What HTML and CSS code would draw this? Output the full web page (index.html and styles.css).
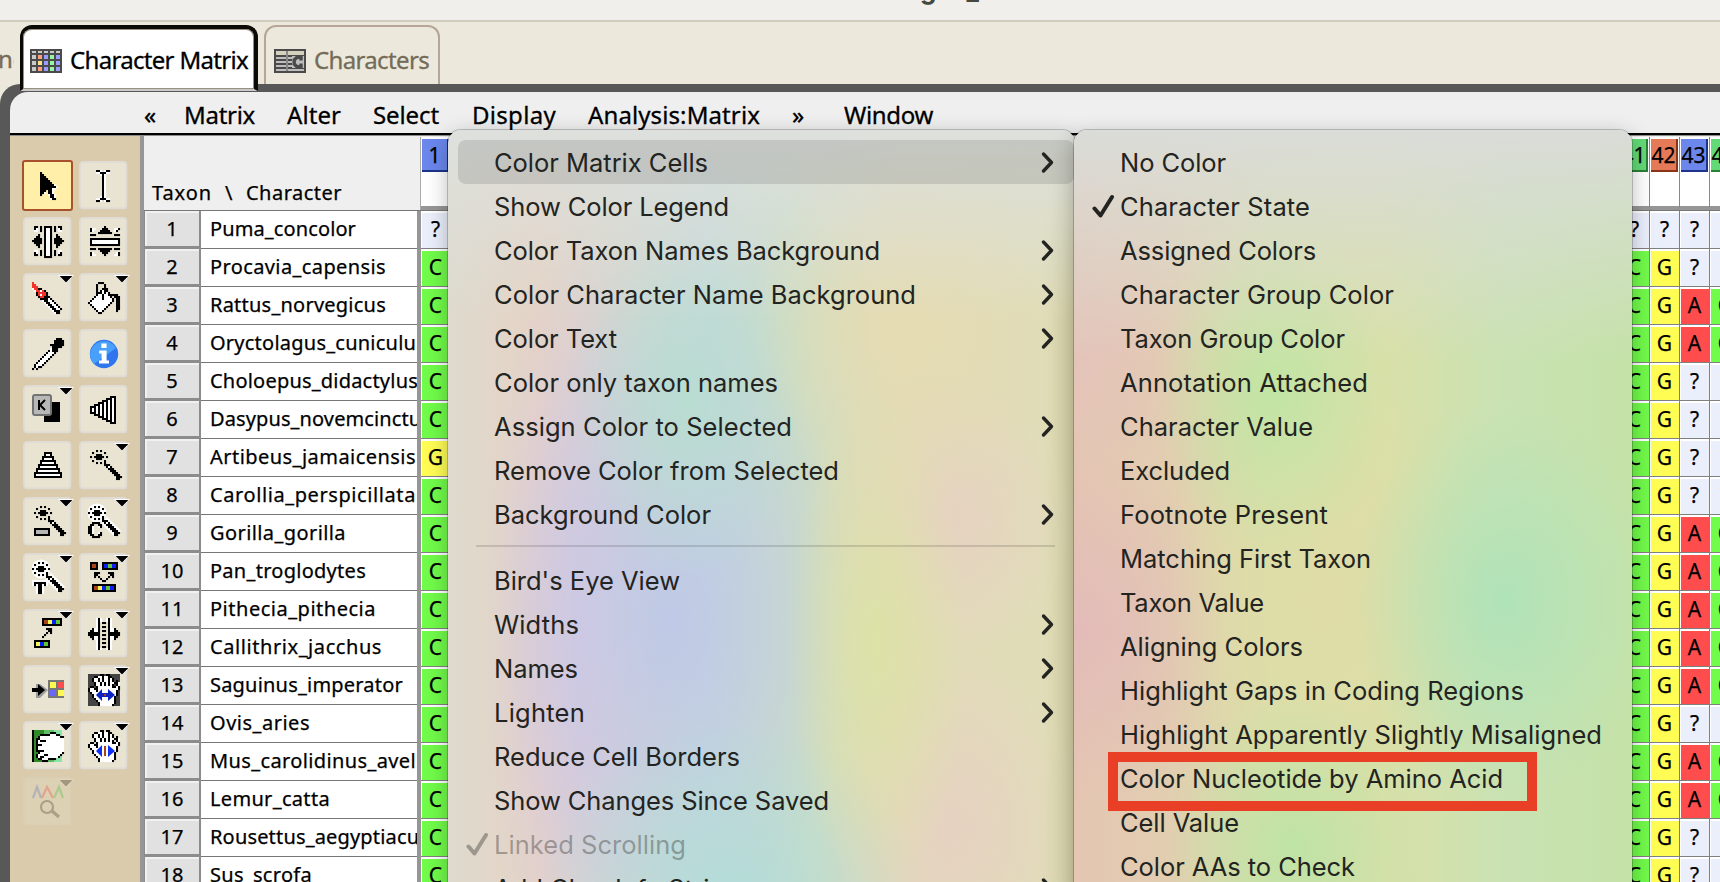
FILE: index.html
```html
<!DOCTYPE html>
<html lang="en">
<head>
<meta charset="utf-8">
<title>Character Matrix</title>
<link rel="stylesheet" href="styles.css">
</head>
<body>
<div class="app">
  <header class="titlebar"><span class="title">ges_</span><span class="subtitle">Characters</span></header>
  <nav class="tabs">
    <div class="tab-cut">ne</div>
    <div class="tab active">
      <svg class="tab-icon" viewBox="0 0 32 24"><path fill="#4a4a4a" d="M0 0h32v24H0z"/><g fill="#c9c9c9"><path d="M2 2h4v2H2zM8 2h4v2H8zM14 2h4v2h-4zM20 2h4v2h-4zM26 2h4v2h-4zM2 6h4v4H2zM2 12h4v4H2zM2 18h4v4H2z"/></g><path fill="#ffa07c" d="M8 6h4v4H8zM8 18h4v4H8z"/><path fill="#ffe28a" d="M8 12h4v4H8z"/><path fill="#9c9cff" d="M14 6h4v4h-4zM14 12h4v4h-4zM14 18h4v4h-4zM26 6h4v4h-4zM26 12h4v4h-4zM26 18h4v4h-4z"/><path fill="#93f7a4" d="M20 6h4v4h-4zM20 12h4v4h-4zM20 18h4v4h-4z"/></svg>
      <span data-w="178">Character Matrix</span>
    </div>
    <div class="tab">
      <svg class="tab-icon" viewBox="0 0 32 24"><path fill="#4a4a4a" d="M0 0h32v24H0z"/><path fill="#d2d1bd" d="M2 2h28v4H2z"/><path fill="#bebebe" d="M2 8h28v2H2zM2 12h28v2H2zM2 16h28v2H2zM2 20h28v2H2z"/><path fill="#888" d="M12 2h2v20h-2z"/><path fill="#bebebe" d="M18 7h12v12H18z"/><path fill="none" stroke="#4a4a4a" stroke-width="3.4" d="M27 11.500V8.200h-4L20.200 11v4l2.800 2.800h4v-3.300"/></svg>
      <span data-w="115">Characters</span>
    </div>
  </nav>
  <div class="frame">
    <main class="panel">
      <div class="menubar">
        <span class="m-prev">«</span><span class="m-matrix" data-w="71">Matrix</span><span class="m-alter" data-w="54">Alter</span><span class="m-select" data-w="66">Select</span><span class="m-display" data-w="84">Display</span><span class="m-analysis" data-w="172">Analysis:Matrix</span><span class="m-next">»</span><span class="m-window" data-w="89">Window</span>
      </div>
      <div class="workspace">
        <aside class="toolbox" id="toolbox"></aside>
        <section class="sheet" id="sheet"></section>
      </div>
    </main>
  </div>
  <div class="menu menu-display" id="display"></div>
  <div class="menu menu-color" id="colors"></div>
  <div class="marker"></div>
</div>
<script src="app.js"></script>
</body>
</html>
```

FILE: styles.css
```css
* { box-sizing: border-box; }
body { margin: 0; font-family: "Noto Sans", "Open Sans", sans-serif; color: #000; overflow: hidden; }
.app { position: relative; width: 1720px; height: 882px; overflow: hidden; background: #ece8db; display: flex; flex-direction: column; }
span[data-w] { white-space: nowrap; display: inline-block; }

.titlebar { flex: none; height: 22px; background: #f0efeb; border-bottom: 2px solid #cfccbe; overflow: hidden; padding-left: 920px; display: flex; font: bold 26px/36px Inter, sans-serif; color: #444841; }
.title { width: 108px; margin-top: -28px; }
.subtitle { margin-top: -27px; color: #a9aaa5; font-size: 24px; }

.tabs { flex: none; height: 62px; display: flex; align-items: flex-start; padding-top: 3px; font-size: 24px; color: #746c58; position: relative; z-index: 2; -webkit-text-stroke: .3px; }
.tab-cut { width: 14px; height: 59px; margin-right: 6px; overflow: hidden; line-height: 68px; text-indent: -2px; }
.tab { height: 59px; width: 176px; display: flex; align-items: center; gap: 8px; padding: 10px 0 0 8px; border: 2px solid #b5a698; border-bottom: 0; border-radius: 12px 12px 0 0; margin-left: 6px; }
.tab.active { width: 238px; height: 66px; margin-left: 0; padding: 3px 0 0 7px; background: #fff; color: #000; border: 4px solid #0c0a07; border-bottom: 2px solid #c9c9c9; border-left-width: 3px; box-shadow: inset 0 0 0 1px #9a9082; }
.tab-icon { width: 32px; height: 24px; flex: none; }
.tab span { line-height: 34px; margin-top: -2px; }

.frame { flex: 1; background: #585858; border-top-left-radius: 20px; padding: 8px 0 0 10px; min-height: 0; }
.panel { height: 100%; background: #efefef; border-top-left-radius: 18px; display: flex; flex-direction: column; overflow: hidden; }
.menubar { flex: none; height: 43px; border-bottom: 2px solid #000; position: relative; display: flex; padding-left: 134px; font-size: 24px; line-height: 45px; box-shadow: 0 1px 0 #8d8d8d; -webkit-text-stroke: .3px; }
.m-prev { width: 40px; }
.m-matrix { width: 103px; }
.m-alter { width: 86px; }
.m-select { width: 99px; }
.m-display { width: 116px; }
.m-analysis { width: 204px; }
.m-next { width: 52px; }

.workspace { flex: 1; display: flex; min-height: 0; }
.toolbox { flex: none; width: 130px; background: #d9cbab; padding: 25px 0 0 12px; display: grid; grid-template-columns: 56px 56px; grid-auto-rows: 56px; }
.tool { width: 56px; height: 56px; display: block; overflow: visible; }
.tool.off { opacity: .25; }
.sheet { flex: 1; border-left: 4px solid #969696; overflow: hidden; padding-top: 2px; -webkit-text-stroke: .25px; }
.head, .row { display: flex; }
.head { height: 74px; border-bottom: 1px solid #777; }
.corner { width: 277px; height: 73px; flex: none; border-right: 1px solid #aaa; padding: 43px 0 0 8px; font-size: 20px; line-height: 25px; display: flex; }
.corner .w1 { width: 73px; }
.corner .w2 { width: 21px; }
.spacer { flex: none; width: 1169px; }
.col { flex: none; width: 30px; height: 73px; border-right: 1px solid #888; border-bottom: 4px solid #969696; background: #fff; }
.col b { display: block; margin: 2px 1px 0 1px; height: 33px; font: 21px/32px "Noto Sans", sans-serif; text-align: center; border-right: 2px solid; border-bottom: 2px solid; white-space: nowrap; }
.col i { font-style: normal; color: #000; }
.col .blue { background: #6b87ec; border-color: #1c3489; }
.col .green { background: #63da78; border-color: #2b7f36; }
.col .orange { background: #e57a58; border-color: #8a3417; }

.row { height: 38px; font-size: 20px; line-height: 35px; }
.num { flex: none; width: 57px; height: 38px; text-align: center; background: #e1e1e1; border: solid #8c8c8c; border-width: 0 2px 3px 1px; box-shadow: inset 2px 2px 0 #f1f1f1; }
.name { flex: none; width: 216px; height: 38px; padding-left: 9px; background: #fff; border-bottom: 1px solid #777; overflow: hidden; white-space: nowrap; }
.gutter { flex: none; width: 4px; background: #969696; }
.cell { flex: none; width: 30px; height: 38px; text-align: center; border: solid #808080; border-width: 0 1px 1px 0; box-shadow: inset 1px 2px 0 #fff; line-height: 36px; font-size: 21px; }
.cell.C { background: #71fb4a; }
.cell.G { background: #fffd54; }
.cell.A { background: #ff4d4d; }
.cell.Q { background: #ebeffb; }

.menu { position: absolute; top: 130px; height: 790px; padding-top: 10px; border-radius: 13px; box-shadow: 0 0 0 1px rgba(0,0,0,.2), 0 6px 22px rgba(0,0,0,.28); font: 25.5px/44px Inter, sans-serif; color: #232421; }
.menu-display { left: 448px; width: 627px; background:
  linear-gradient(#dde0dc 0, rgba(221,224,220,0) 190px),
  linear-gradient(90deg, transparent 595px, #d3d0a5 627px),
  radial-gradient(90px 260px at 430px 510px, #dde2a7 0, transparent 100%),
  radial-gradient(150px 190px at 455px 190px, #e5dcb2 0, transparent 100%),
  radial-gradient(120px 180px at 240px 270px, #b9ddd1 0, transparent 100%),
  radial-gradient(190px 170px at 280px 760px, #b4dcd8 0, transparent 100%),
  radial-gradient(180px 330px at 225px 490px, #bfc9e6 0, transparent 100%),
  radial-gradient(100px 400px at 135px 500px, #d9c7e2 0, transparent 100%),
  radial-gradient(130px 150px at 495px 390px, #e6d2c2 0, transparent 100%),
  radial-gradient(130px 190px at 505px 700px, #e6d2c2 0, transparent 100%),
  linear-gradient(90deg, #dedacd 0, #e5d3c5 90px, #c5d9d9 260px, #cbddc6 350px, #e1dbb7 450px, #e0ddb8 627px); }
.menu-color { left: 1074px; width: 558px; background:
  linear-gradient(#dadcd8 0, rgba(217,222,215,0) 230px),
  radial-gradient(150px 200px at 430px 470px, #b0e3b8 0, transparent 100%),
  radial-gradient(120px 170px at 200px 260px, #c1e5a5 0, transparent 100%),
  radial-gradient(130px 150px at 220px 715px, #bfe3a6 0, transparent 100%),
  radial-gradient(140px 180px at 10px 500px, #e3bcb9 0, transparent 100%),
  radial-gradient(130px 150px at 0 220px, #e4c4ba 0, transparent 100%),
  radial-gradient(160px 250px at 250px 470px, #e0dca7 0, transparent 100%),
  linear-gradient(90deg, #e4c6b2 0, #e2ceb0 100px, #d9dfa8 200px, #d9e0a8 310px, #cae2b3 430px, #c5e2a8 558px); }
.item { height: 44px; position: relative; display: flex; align-items: center; padding-left: 46px; white-space: nowrap; }
.item span { position: relative; top: 1px; }
.menu-color .item { padding-left: 46px; }
.item.on { margin-left: 10px; padding-left: 36px; margin-right: 1px; background: rgba(0,0,0,.11); border-radius: 8px; }
.item.dim { color: rgba(35,36,33,.36); }
.sep { height: 22px; margin: 0 20px 0 28px; padding-top: 9px; }
.sep::before { content: ""; display: block; height: 2px; background: rgba(0,0,0,.13); }
.arrow { position: absolute; right: 21px; top: 10px; width: 13px; height: 24px; }
.item.on .arrow { right: 20px; }
.tick { position: absolute; left: 18px; top: 10px; width: 23px; height: 24px; }
.arrow path, .tick path { fill: none; stroke: currentColor; stroke-width: 3.4; stroke-linecap: round; stroke-linejoin: round; }
.marker { position: absolute; left: 1108px; top: 752px; width: 429px; height: 59px; border: 10px solid #e93f26; }
```

FILE: app.js
```js
// Character matrix data: [name, width in px, whether site 43 is scored A]
const taxa = [
  ['Puma_concolor', 146, 0], ['Procavia_capensis', 176, 0], ['Rattus_norvegicus', 176, 1],
  ['Oryctolagus_cuniculus', 216, 1], ['Choloepus_didactylus', 208, 0], ['Dasypus_novemcinctus', 221, 0],
  ['Artibeus_jamaicensis', 206, 0], ['Carollia_perspicillata', 206, 0], ['Gorilla_gorilla', 136, 1],
  ['Pan_troglodytes', 156, 1], ['Pithecia_pithecia', 166, 1], ['Callithrix_jacchus', 172, 1],
  ['Saguinus_imperator', 193, 1], ['Ovis_aries', 100, 0], ['Mus_carolidinus_avel', 206, 1],
  ['Lemur_catta', 120, 1], ['Rousettus_aegyptiacus', 219, 0], ['Sus_scrofa', 102, 0]
];
const cell = s => `<div class="cell ${s === '?' ? 'Q' : s}">${s}</div>`;
const col = (n, c) => `<div class="col"><b class="${c}"><i>${n}</i></b></div>`;
let sheet = `<div class="head"><div class="corner"><span class="w1" data-w="60">Taxon</span><span class="w2">\\</span><span data-w="96">Character</span></div>
  ${col(1, 'blue')}<div class="spacer"></div>${col(41, 'green')}${col(42, 'orange')}${col(43, 'blue')}${col(44, 'green')}</div>`;
taxa.forEach(([name, w, a], i) => {
  const first = i === 0 ? '?' : i === 6 ? 'G' : 'C';
  const right = i === 0 ? '????' : 'CG' + (a ? 'AC' : '??');
  sheet += `<div class="row"><div class="num">${i + 1}</div><div class="name"><span data-w="${w}">${name}</span></div><div class="gutter"></div>${cell(first)}<div class="spacer"></div>${[...right].map(cell).join('')}</div>`;
});
document.getElementById('sheet').innerHTML = sheet;

// Menus: [label, width, flags] where > is a submenu, v a tick, * highlighted, - disabled
const display = [
  ['Color Matrix Cells', 214, '>*'], ['Show Color Legend', 235, ''], ['Color Taxon Names Background', 386, '>'],
  ['Color Character Name Background', 422, '>'], ['Color Text', 123, '>'], ['Color only taxon names', 284, ''],
  ['Assign Color to Selected', 298, '>'], ['Remove Color from Selected', 345, ''], ['Background Color', 217, '>'], null,
  ["Bird's Eye View", 186, ''], ['Widths', 85, '>'], ['Names', 84, '>'], ['Lighten', 91, '>'],
  ['Reduce Cell Borders', 246, ''], ['Show Changes Since Saved', 335, ''], ['Linked Scrolling', 192, 'v-'], ['Add Char Info Strip', 231, '>']
];
const colors = [
  ['No Color', 106, ''], ['Character State', 190, 'v'], ['Assigned Colors', 196, ''], ['Character Group Color', 274, ''],
  ['Taxon Group Color', 225, ''], ['Annotation Attached', 248, ''], ['Character Value', 193, ''], ['Excluded', 110, ''],
  ['Footnote Present', 208, ''], ['Matching First Taxon', 251, ''], ['Taxon Value', 144, ''], ['Aligning Colors', 183, ''],
  ['Highlight Gaps in Coding Regions', 404, ''], ['Highlight Apparently Slightly Misaligned', 482, ''],
  ['Color Nucleotide by Amino Acid', 383, ''], ['Cell Value', 119, ''], ['Color AAs to Check', 235, '']
];
const item = it => {
  if (!it) return '<div class="sep"></div>';
  const [t, w, f] = it;
  return `<div class="item${f.includes('*') ? ' on' : ''}${f.includes('-') ? ' dim' : ''}">` +
    (f.includes('v') ? '<svg class="tick" viewBox="0 0 23 24"><path style="stroke-width:4" d="M2.5 14.5L8.5 21.5L20 3"/></svg>' : '') +
    `<span data-w="${w}">${t}</span>` +
    (f.includes('>') ? '<svg class="arrow" viewBox="0 0 13 24"><path d="M2.5 4l8 8.5-8 8.5"/></svg>' : '') + '</div>';
};
document.getElementById('display').innerHTML = display.map(item).join('');
document.getElementById('colors').innerHTML = colors.map(item).join('');

// Tool icons: 16 by 16 bitmaps, one character per pixel
const ink = { '#': '#000', w: '#fff', r: '#f0352b', g: '#b5b5b5', B: '#0a1ef5', G: '#5fc63a', Y: '#f4f552', O: '#a8441c' };
const px = rows => rows.map((r, y) => [...r].map((c, x) => ink[c] ? `<rect x="${x}" y="${y}" width="1.03" height="1.03" fill="${ink[c]}"/>` : '').join('')).join('');
const wand = ['...#.#', '.#.....#', '...###', '#.#####.#', '...###', '.#.....#', '...#.#.#', '.......###', '........#w#', '.........###', '..........###', '...........###', '............###', '.............###', '.............##'];
const wandHalo = '<circle cx="4.5" cy="3.5" r="4.7" fill="#fff"/><path d="M8 7l7 7" stroke="#fff" stroke-width="4.4"/>';
const hand = px([
  '......##.##', '...##ww#ww##', '..#ww#w#ww#w#', '..#ww#w#ww#w#.#', '...#ww#w#w#ww##w', '...#ww#w#w#w#.#w', '.##.#wwwwwww##w#', '#ww##wwwwwwwwww#', '#www#wwwwwwwww#', '.#wwwwwwwwwwww#', '..#wwwwwwwwwww#', '..#wwwwwwwwww#', '...#wwwwwwwww#', '....#wwwwwwww#', '.....#wwwwwww#', '.....#wwwwww#']);
const span = c => `<path fill="${c}" d="M4 10.500l3-3v2h3v-2l3.500 3-3.500 3v-2H7v2z"/>`;
const strip = (x, y, s) => `<path d="M${x} ${y}h${s.length * 2 + 2}v4h-${s.length * 2 + 2}z"/>` + [...s].map((c, i) => `<path fill="${ink[c]}" d="M${x + 1 + i * 2} ${y + 1}h2v2h-2z"/>`).join('');
const tools = [
  [px(['', '....#', '....##', '....###', '....####', '....#####', '....######', '....#######w', '....########w', '....######ww', '....###.##w', '....##w.##w', '....#...w##w', '.........##w', '.........w##']), 'sel'],
  [px(['....##w.w##', '....ww###ww', '......w#w', '.......#w', '.......#w', '.......#w', '.......#w', '.......#w', '.......#w', '.......#w', '.......#w', '.......#w', '.......#w', '......w#w', '....ww###ww', '....##w.w##'])],
  [px(['.##.#.####.#.##.', '.#w.#.#ww#.#.w#.', '.ww.#.#ww#.#.ww.', '......#ww#......', '...#..#ww#..#...', '..##..#ww#..##..', '.####.#ww#.####.', '#####.#ww#.#####', '.####.#ww#.####.', '..##..#ww#..##..', '...#..#ww#..#...', '......#ww#......', '.ww.#.#ww#.#.ww.', '.#w.#.#ww#.#.w#.', '.##.#.#ww#.#.##.', '......####......'])],
  [px(['........#', '.#ww...###...ww#', '.#w...#####..w#', '.....#######', '.###.........###', '', '.###############', '.#wwwwwwwwwwwww#', '.#wwwwwwwwwwwww#', '.###############', '', '.###.#######.###', '......#####', '.#w....###....w#', '.#ww....#....ww#'])],
  [px(['r', 'rr', 'rrr', 'wrr##', '.wrrwr#', '..#rrrr#', '..#rwrr#', '...#rr###', '....####w#', '.....w##ww#', '......w##ww#', '.......w##ww#', '........w##ww#', '.........w##ww#', '..........w###', '...........w##']), 'drop'],
  [px(['.....###', '....#...#', '....#...#', '....#..###', '....#.#w##', '....###w#w#', '....#ww#ww#####', '...#www#www#.###', '..#wwww#wwww#.##', '.#wwwwwwwwww#.##', '#wwwwwwwwww#..##', '.#wwwwwwww#...##', '..#wwwwww#....##', '...#wwww#.....##', '....#ww#......#', '.....##']), 'drop'],
  [px(['............###', '...........#####', '...........#####', '.........#######', '..........#####', '.........w###', '........#w###', '.......#www#', '......#www#', '.....#www#', '....#www#', '...#www#', '..#www#', '.#www#', '.#w##', '#.#'])],
  ['<circle cx="8" cy="8" r="7.1" fill="#2f75ee"/><path fill="#48a0fb" d="M1 8a7 7 0 0 1 13-3L3 13A7 7 0 0 1 1 8z"/><path fill="#fff" d="M6.7 2.7h2.6v2.3H6.700zM5.600 6.300h3.700v5h1.200v1.400h-5v-1.400h1.300V7.700H5.600z"/>'],
  ['<path d="M6 4h8v10H6z"/><rect x=".5" y=".5" width="9" height="10" rx="1" fill="#b8b8b8" stroke="#737373"/><path d="M3.500 3v5M6.500 3L4 5.500 6.500 8" fill="none" stroke="#000"/>', 'drop'],
  ['<path d="M14 15V1h-3v1H9v1H7v1H5v1H3v1H1v4h2v1h2v1h2v1h2v1h2v1z"/><path fill="#fff" d="M12 2h1v12h-1zM10 3h1v10h-1zM8 4h1v8H8zM6 5h1v6H6zM4 6h1v4H4zM2 7h1v2H2z"/>'],
  ['<path d="M6 1h4v2h1v2h1v2h1v2h1v2h1v3H1v-3h1V9h1V7h1V5h1V3h1z"/><path fill="#fff" d="M7 2h2v1H7zM6 4h4v1H6zM5 6h6v1H5zM4 8h8v1H4zM3 10h10v1H3zM2 12h12v1H2z"/>'],
  [`<g transform="translate(1)">${px(wand)}</g>`, 'drop'],
  [`<g transform="translate(1)">${px(wand)}</g><path fill="#b5b5b5" stroke="#000" d="M1.500 11.500h7v3h-7z"/>`, 'drop'],
  [wandHalo + px(wand) + px(['', '', '', '', '', '', '', '', '..####', '.##..##', '##w..w#', '##w', '##w', '##w..w#', '.##..##', '..####']), 'drop'],
  [wandHalo + px(wand) + px(['', '', '', '', '', '', '', '', '', 'wwwwwwww', 'w######w', 'w#w##w#w', '..w##w', '..w##w', '..w##w', '..w##w']), 'drop'],
  [strip(1, 0, 'O') + strip(7, 0, 'BGB') + strip(2, 11, 'OYBGB') + px(['', '', '', '', '', '...###....###', '...##......##', '...#.#....#.#', '......#..#', '.......##']), 'drop'],
  [strip(5, 0, 'OYBG') + strip(1, 11, 'YBG') + px(['', '', '', '', '', '.......###', '........##', '.......#.#', '......#', '.....#']), 'drop'],
  [px(['....w#w..w#w', '....w#w..w#w', '....w#.##.#w', '....w#....#w', '....w#.##.#w', '..#ww#....#ww#', '.##ww#.##.#ww##', '######....######', '######.##.######', '.##ww#....#ww##', '..#ww#.##.#ww#', '....w#....#w', '....w#.##.#w', '....w#....#w', '....w#.##.#w', '....w#w..w#w']), 'drop'],
  ['<path fill="#999" d="M2 5h2l4 3-4 4H2z"/><path d="M0 7h3V5l3.500 3L3 11V9H0z"/><path fill="#777" d="M8 3h8v9H8z"/><path fill="#fffa50" d="M9 4h3v3H9zM13 8h3v3h-3z"/><path fill="#fb4e4e" d="M13 4h3v3h-3z"/><path fill="#6868fa" d="M9 8h3v3H9z"/>'],
  ['<path fill="#444" d="M0 0h16v16H0z"/>' + hand + span('#0a25c4') + '<path fill="#a8441c" d="M8 10h1v1H8z"/>', 'drop'],
  ['<path fill="#2f8b28" d="M0 0h6v16H0z"/><path fill="#5fbf62" d="M6 0h5v16H6z"/><path fill="#8be3a6" d="M11 0h4v16h-4z"/><path d="M0 0h1v16H0z"/>' + px(['', '.........###', '....#####www##', '...#wwwwwwwwww##', '..##wwwwwwwwwwww', '..#w###wwwwwwwww', '..#wwwwwwwwwwwww', '..###wwwwwwwwwww', '..#wwwwwwwwwwwww', '..#wwwwwwwwwwwww', '..####wwwwwwwwww', '...#wwwwwwwwwww#', '..#www##wwwwww#', '..#w##wwwwwww#', '...##www####', '.....###']), 'drop'],
  [hand + span('#1030f8') + '<path fill="#fff" d="M7 8h3v5H7z"/><path fill="#a8441c" d="M8 8h1v5H8z"/>', 'drop'],
  ['<g fill="none" stroke-width="1.100"><path stroke="#4b66e6" d="M.5 6l2-5.500 2 5.500"/><path stroke="#f33" d="M5 6l2.500-5.500L10.500 6"/><path stroke="#2c3" d="M11 6l2.500-5.500L15.500 6"/><circle cx="7.500" cy="10.500" r="3" stroke="#222"/><path stroke="#222" stroke-width="1.600" d="M10 12.500l3.500 3"/></g>', 'drop off']
];
document.getElementById('toolbox').innerHTML = tools.map(([art, f = '']) =>
  `<svg class="tool${f.includes('off') ? ' off' : ''}" viewBox="0 0 28 28">` +
  (f === 'sel' ? '<rect x=".5" y=".5" width="24.500" height="24.500" rx="1" fill="#ffefa9" stroke="#a8512c"/>' : '<rect x="1" y="1" width="23.200" height="23.200" rx="1.500" fill="#e9e3d2" stroke="#dfdbd5" stroke-width=".9"/>') +
  `<g transform="translate(5 5)">${art}</g>` +
  (f.includes('drop') ? '<path d="M18 1.500h8l-4 4.200z" fill="#fff"/><path d="M18.800 2h6.400L22 5.200z"/>' : '') + '</svg>').join('');

// Spread each label over its measured width
document.querySelectorAll('[data-w]').forEach(el => {
  const r = document.createRange();
  r.selectNodeContents(el);
  const natural = r.getBoundingClientRect().width;
  el.style.letterSpacing = ((+el.dataset.w - natural) / el.textContent.length).toFixed(3) + 'px';
});
```
